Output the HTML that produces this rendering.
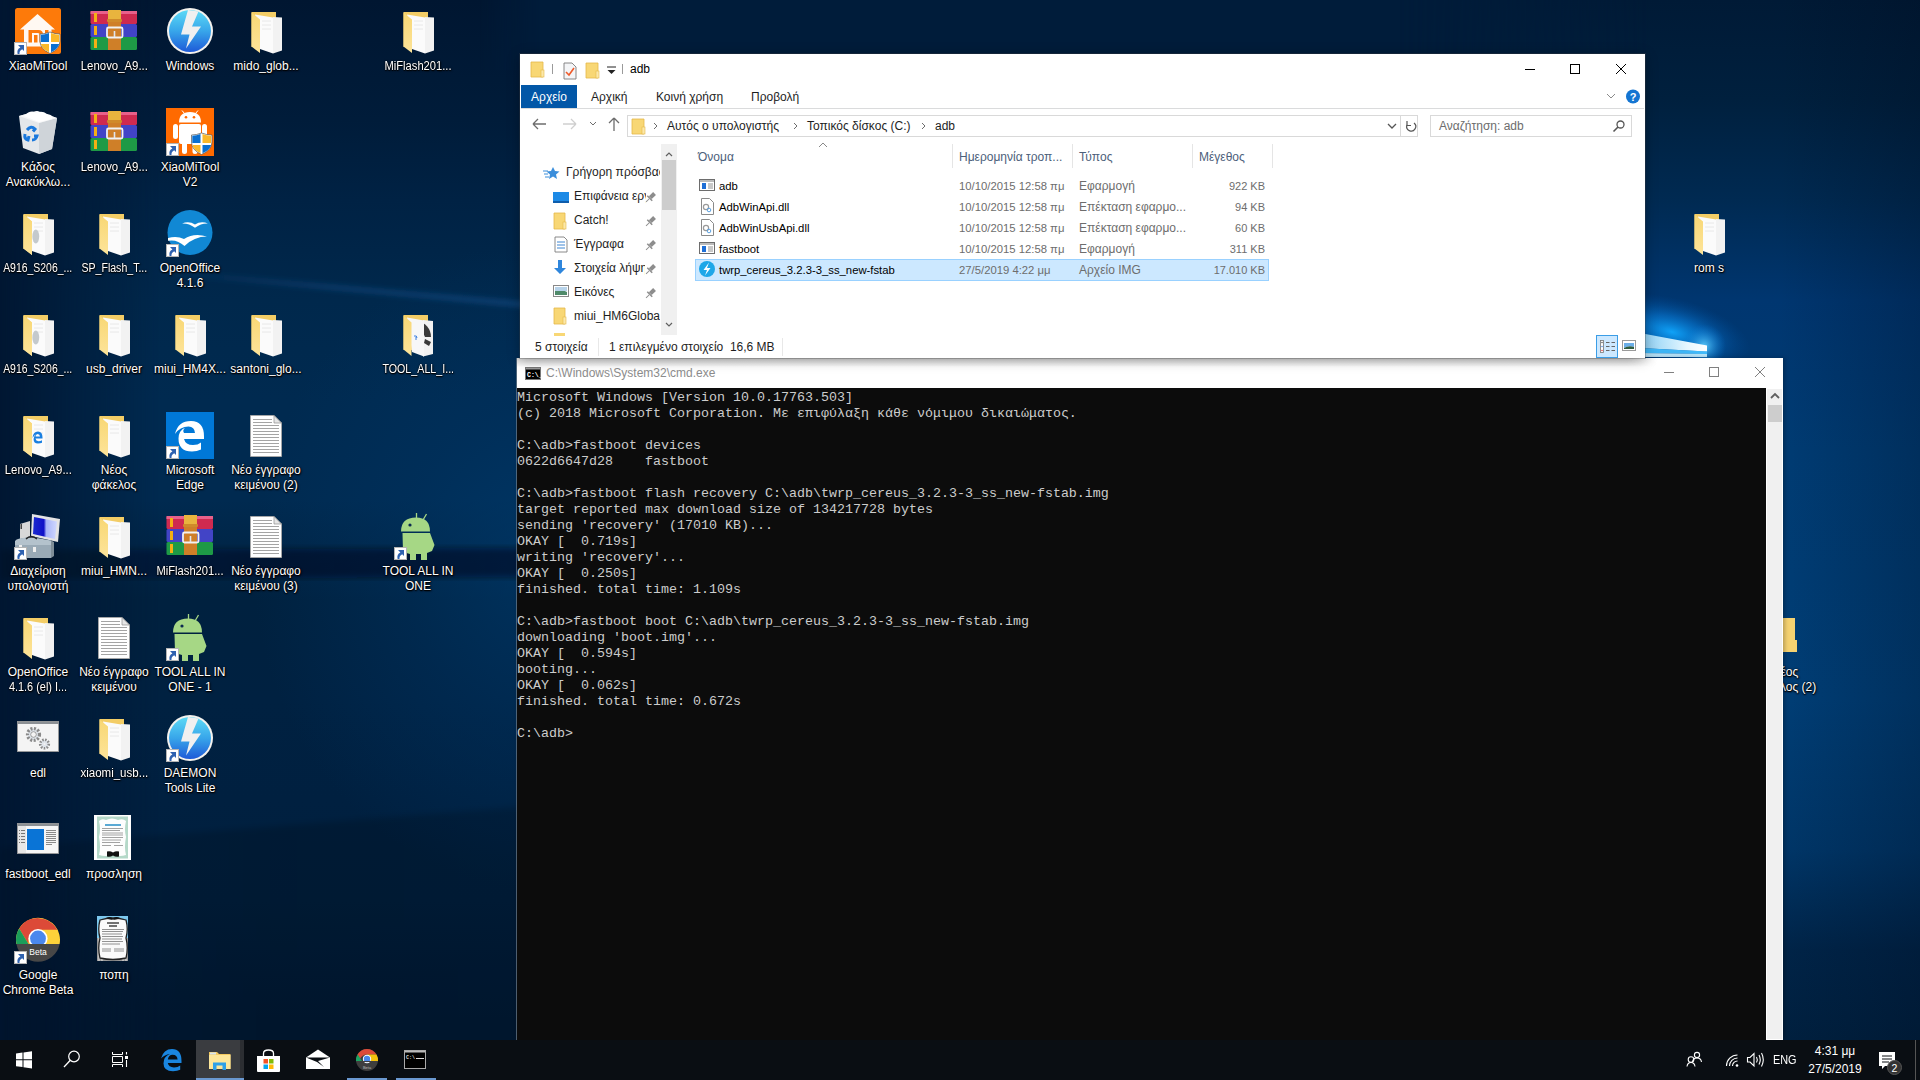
<!DOCTYPE html><html><head><meta charset="utf-8"><style>
*{box-sizing:border-box;margin:0;padding:0}
html,body{width:1920px;height:1080px;overflow:hidden;background:#011a36;font-family:"Liberation Sans",sans-serif}
.abs{position:absolute}
#bg{position:absolute;left:0;top:0;width:1920px;height:1080px;overflow:hidden}
.ic{position:absolute;width:76px;height:100px;text-align:center}
.ic svg{position:absolute;left:14px;top:0;width:48px;height:48px}
.ic .lb{position:absolute;left:0;top:52px;width:76px;color:#fff;font-size:12px;line-height:15px;text-shadow:0 1px 1px #000,0 0 2px #000,1px 1px 2px rgba(0,0,0,.8)}
</style></head><body>
<div id="bg">
<div class="abs" style="left:0;top:0;width:1920px;height:1080px;background:#001631"></div>
<div class="abs" style="left:0;top:0;width:1100px;height:1080px;background:linear-gradient(180deg,#001631 0px,#001c3a 120px,#002244 200px,#00284c 300px,#002a50 400px,#002a50 500px,#00213f 600px,#002141 700px,#002040 800px,#001f3e 900px,#001a36 1020px);-webkit-mask-image:linear-gradient(90deg,rgba(0,0,0,.05) 0px,#000 160px)"></div>
<div class="abs" style="left:480px;top:0;width:1250px;height:70px;background:#001c3a;-webkit-mask-image:linear-gradient(90deg,transparent 0px,#000 60px,#000 1150px,transparent 1250px)"></div>
<div class="abs" style="left:200px;top:250px;width:700px;height:700px;background:radial-gradient(ellipse at 50% 45%,rgba(0,62,115,.6) 0%,rgba(0,55,105,.35) 30%,rgba(0,40,80,0) 60%)"></div>
<svg class="abs" style="left:0;top:230px" width="1100" height="140" viewBox="0 230 1100 140">
 <defs><linearGradient id="lband" x1="0" y1="0" x2="1" y2="0"><stop offset="0" stop-color="#2a70c0" stop-opacity="0"/><stop offset=".2" stop-color="#2a70c0" stop-opacity=".22"/><stop offset=".5" stop-color="#2a70c0" stop-opacity=".28"/></linearGradient><filter id="blr2" x="-5%" y="-50%" width="110%" height="200%"><feGaussianBlur stdDeviation="2.5"/></filter></defs>
 <path d="M150 268 L1100 352 L1100 360 L150 274Z" fill="url(#lband)" filter="url(#blr2)"/>
</svg>
<svg class="abs" style="left:0;top:500px" width="1100" height="580" viewBox="0 500 1100 580">
 <defs><filter id="blr" x="-5%" y="-5%" width="110%" height="110%"><feGaussianBlur stdDeviation="3"/></filter>
 <linearGradient id="strk" x1="0" y1="0" x2="1" y2="0"><stop offset="0" stop-color="#000814" stop-opacity=".15"/><stop offset=".25" stop-color="#000814" stop-opacity=".45"/><stop offset="1" stop-color="#000814" stop-opacity=".6"/></linearGradient>
 <linearGradient id="lowr" x1="0" y1="0" x2="1" y2="0"><stop offset="0" stop-color="#000814" stop-opacity=".1"/><stop offset=".25" stop-color="#000814" stop-opacity=".18"/><stop offset="1" stop-color="#000814" stop-opacity=".12"/></linearGradient></defs>
 <path d="M0 550 L1100 546 V575 L0 579Z" fill="url(#strk)" filter="url(#blr)"/>
 <path d="M0 848 L520 807 L1100 760 V1080 H0Z" fill="url(#lowr)" filter="url(#blr)"/>
</svg>
<div class="abs" style="left:1400px;top:0;width:520px;height:1080px;background:linear-gradient(180deg,#001a36 0px,#00203e 100px,#002a52 200px,#003670 300px,#003c74 450px,#003e76 700px,#003668 850px,#002448 950px,#00203f 1040px);-webkit-mask-image:linear-gradient(90deg,transparent 0px,#000 250px)"></div>
<div class="abs" style="left:1780px;top:0;width:140px;height:1080px;background:linear-gradient(90deg,rgba(0,8,24,0),rgba(0,8,24,.25))"></div>
<svg class="abs" style="left:1600px;top:220px" width="200" height="140" viewBox="0 0 200 140">
 <defs><linearGradient id="bm" x1="0" y1="0" x2="1" y2="0"><stop offset="0" stop-color="#9fe0ff" stop-opacity=".85"/><stop offset=".7" stop-color="#e6f7ff"/><stop offset="1" stop-color="#ffffff"/></linearGradient>
 <radialGradient id="bgl" cx=".5" cy=".5" r=".5"><stop offset="0" stop-color="#10a8ff" stop-opacity=".95"/><stop offset=".45" stop-color="#0880e0" stop-opacity=".55"/><stop offset="1" stop-color="#0050a0" stop-opacity="0"/></radialGradient>
 <radialGradient id="bgl2" cx=".5" cy=".5" r=".5"><stop offset="0" stop-color="#60d0ff" stop-opacity=".9"/><stop offset="1" stop-color="#0070d0" stop-opacity="0"/></radialGradient></defs>
 <ellipse cx="72" cy="112" rx="80" ry="34" fill="url(#bgl)" transform="rotate(14 72 112)"/>
 <ellipse cx="104" cy="126" rx="22" ry="22" fill="url(#bgl2)"/>
 <path d="M40 113 L107 125.5 V131.5 L40 128Z" fill="url(#bm)"/>
 <path d="M40 128 L107 131.5 V134 L40 133Z" fill="#44c0ff" opacity=".9"/>
 <path d="M40 133 L107 134 V137 L40 137Z" fill="#c8f0ff" opacity=".9"/>
</svg>
</div>
<div class="ic" style="left:0px;top:7px"><svg viewBox="0 0 48 48"><use href="#i_xmt"/><use href="#sc"/></svg><div class="lb">XiaoMiTool</div></div>
<div class="ic" style="left:76px;top:7px"><svg viewBox="0 0 48 48"><use href="#i_rar"/></svg><div class="lb"><span style="display:inline-block;margin:0 -10px;transform:scaleX(0.95)">Lenovo_A9...</span></div></div>
<div class="ic" style="left:152px;top:7px"><svg viewBox="0 0 48 48"><use href="#i_dtl"/></svg><div class="lb">Windows</div></div>
<div class="ic" style="left:228px;top:7px"><svg viewBox="0 0 48 48"><use href="#i_fold"/></svg><div class="lb">mido_glob...</div></div>
<div class="ic" style="left:380px;top:7px"><svg viewBox="0 0 48 48"><use href="#i_fold"/></svg><div class="lb"><span style="display:inline-block;margin:0 -10px;transform:scaleX(0.93)">MiFlash201...</span></div></div>
<div class="ic" style="left:0px;top:108px"><svg viewBox="0 0 48 48"><use href="#i_bin"/></svg><div class="lb">Κάδος<br>Ανακύκλω...</div></div>
<div class="ic" style="left:76px;top:108px"><svg viewBox="0 0 48 48"><use href="#i_rar"/></svg><div class="lb"><span style="display:inline-block;margin:0 -10px;transform:scaleX(0.95)">Lenovo_A9...</span></div></div>
<div class="ic" style="left:152px;top:108px"><svg viewBox="0 0 48 48"><use href="#i_xmt2"/><use href="#sc"/></svg><div class="lb">XiaoMiTool<br>V2</div></div>
<div class="ic" style="left:0px;top:209px"><svg viewBox="0 0 48 48"><use href="#i_foldD"/></svg><div class="lb"><span style="display:inline-block;margin:0 -10px;transform:scaleX(0.87)">A916_S206_...</span></div></div>
<div class="ic" style="left:76px;top:209px"><svg viewBox="0 0 48 48"><use href="#i_fold"/></svg><div class="lb"><span style="display:inline-block;margin:0 -10px;transform:scaleX(0.88)">SP_Flash_T...</span></div></div>
<div class="ic" style="left:152px;top:209px"><svg viewBox="0 0 48 48"><use href="#i_oo"/><use href="#sc"/></svg><div class="lb">OpenOffice<br>4.1.6</div></div>
<div class="ic" style="left:0px;top:310px"><svg viewBox="0 0 48 48"><use href="#i_foldD"/></svg><div class="lb"><span style="display:inline-block;margin:0 -10px;transform:scaleX(0.87)">A916_S206_...</span></div></div>
<div class="ic" style="left:76px;top:310px"><svg viewBox="0 0 48 48"><use href="#i_fold"/></svg><div class="lb">usb_driver</div></div>
<div class="ic" style="left:152px;top:310px"><svg viewBox="0 0 48 48"><use href="#i_fold"/></svg><div class="lb">miui_HM4X...</div></div>
<div class="ic" style="left:228px;top:310px"><svg viewBox="0 0 48 48"><use href="#i_fold"/></svg><div class="lb">santoni_glo...</div></div>
<div class="ic" style="left:380px;top:310px"><svg viewBox="0 0 48 48"><use href="#i_foldT"/></svg><div class="lb"><span style="display:inline-block;margin:0 -10px;transform:scaleX(0.89)">TOOL_ALL_I...</span></div></div>
<div class="ic" style="left:0px;top:411px"><svg viewBox="0 0 48 48"><use href="#i_foldL"/></svg><div class="lb"><span style="display:inline-block;margin:0 -10px;transform:scaleX(0.95)">Lenovo_A9...</span></div></div>
<div class="ic" style="left:76px;top:411px"><svg viewBox="0 0 48 48"><use href="#i_fold"/></svg><div class="lb">Νέος<br>φάκελος</div></div>
<div class="ic" style="left:152px;top:411px"><svg viewBox="0 0 48 48"><use href="#i_edge"/><use href="#sc"/></svg><div class="lb">Microsoft<br>Edge</div></div>
<div class="ic" style="left:228px;top:411px"><svg viewBox="0 0 48 48"><use href="#i_txt"/></svg><div class="lb">Νέο έγγραφο<br>κειμένου (2)</div></div>
<div class="ic" style="left:0px;top:512px"><svg viewBox="0 0 48 48"><use href="#i_cm"/><use href="#sc"/></svg><div class="lb">Διαχείριση<br>υπολογιστή</div></div>
<div class="ic" style="left:76px;top:512px"><svg viewBox="0 0 48 48"><use href="#i_fold"/></svg><div class="lb">miui_HMN...</div></div>
<div class="ic" style="left:152px;top:512px"><svg viewBox="0 0 48 48"><use href="#i_rar"/></svg><div class="lb"><span style="display:inline-block;margin:0 -10px;transform:scaleX(0.93)">MiFlash201...</span></div></div>
<div class="ic" style="left:228px;top:512px"><svg viewBox="0 0 48 48"><use href="#i_txt"/></svg><div class="lb">Νέο έγγραφο<br>κειμένου (3)</div></div>
<div class="ic" style="left:380px;top:512px"><svg viewBox="0 0 48 48"><use href="#i_andr"/><use href="#sc"/></svg><div class="lb">TOOL ALL IN<br>ONE</div></div>
<div class="ic" style="left:0px;top:613px"><svg viewBox="0 0 48 48"><use href="#i_fold"/></svg><div class="lb">OpenOffice<br><span style="display:inline-block;margin:0 -10px;transform:scaleX(0.91)">4.1.6 (el) I...</span></div></div>
<div class="ic" style="left:76px;top:613px"><svg viewBox="0 0 48 48"><use href="#i_txt"/></svg><div class="lb">Νέο έγγραφο<br>κειμένου</div></div>
<div class="ic" style="left:152px;top:613px"><svg viewBox="0 0 48 48"><use href="#i_andr"/><use href="#sc"/></svg><div class="lb">TOOL ALL IN<br>ONE - 1</div></div>
<div class="ic" style="left:0px;top:714px"><svg viewBox="0 0 48 48"><use href="#i_edl"/></svg><div class="lb">edl</div></div>
<div class="ic" style="left:76px;top:714px"><svg viewBox="0 0 48 48"><use href="#i_fold"/></svg><div class="lb"><span style="display:inline-block;margin:0 -10px;transform:scaleX(0.96)">xiaomi_usb...</span></div></div>
<div class="ic" style="left:152px;top:714px"><svg viewBox="0 0 48 48"><use href="#i_dtl"/><use href="#sc"/></svg><div class="lb">DAEMON<br>Tools Lite</div></div>
<div class="ic" style="left:0px;top:815px"><svg viewBox="0 0 48 48"><use href="#i_fbe"/></svg><div class="lb">fastboot_edl</div></div>
<div class="ic" style="left:76px;top:815px"><svg viewBox="0 0 48 48"><use href="#i_doc1"/></svg><div class="lb">προσληση</div></div>
<div class="ic" style="left:0px;top:916px"><svg viewBox="0 0 48 48"><use href="#i_chrome"/><use href="#sc"/></svg><div class="lb">Google<br>Chrome Beta</div></div>
<div class="ic" style="left:76px;top:916px"><svg viewBox="0 0 48 48"><use href="#i_doc2"/></svg><div class="lb">ποπη</div></div>
<div class="ic" style="left:1671px;top:209px"><svg viewBox="0 0 48 48"><use href="#i_fold"/></svg><div class="lb">rom s</div></div>
<div class="ic" style="left:1747px;top:613px"><svg viewBox="0 0 48 48"><use href="#i_foldE"/></svg><div class="lb">Νέος<br>φάκελος (2)</div></div>
<svg width="0" height="0" style="position:absolute"><defs>
<linearGradient id="gdtl" x1="0" y1="0" x2="0" y2="1"><stop offset="0" stop-color="#5cdaf6"/><stop offset=".5" stop-color="#38a6ea"/><stop offset="1" stop-color="#1e5ad8"/></linearGradient>
<linearGradient id="gscr" x1="0" y1="0" x2="1" y2="0"><stop offset="0" stop-color="#1a2ad0"/><stop offset=".45" stop-color="#1010c8"/><stop offset=".55" stop-color="#a8b4f8"/><stop offset="1" stop-color="#d0d8ff"/></linearGradient>
<linearGradient id="gfl" x1="0" y1="0" x2="0" y2="1"><stop offset="0" stop-color="#f8d774"/><stop offset="1" stop-color="#fde49a"/></linearGradient>
<symbol id="sc" viewBox="0 0 48 48"><rect x="0.5" y="35.5" width="12" height="12" fill="#fff" stroke="#b4b4b4" stroke-width="1"/><path d="M4 38 H10 V44 L8.2 42.2 Q5 44 5.5 47 H3.6 Q2.5 42 6.4 40.4Z" fill="#2f62b0"/></symbol>
<symbol id="i_fold" viewBox="0 0 48 48"><path d="M9.5 5 H34 V40 H9.5Z" fill="#f3cd66"/><path d="M31 10 L40 10.5 V43.5 L31 46.5Z" fill="#f2f2f2"/><path d="M13 7.5 L31 10.5 V46.5 L18 42Z" fill="#fbfbfb"/><path d="M20 14 H29 M20 18 H29 M20 22 H29" stroke="#e4e4e4" stroke-width=".8"/><path d="M9.5 5.5 L18 12.5 V46 L9.5 39.5Z" fill="url(#gfl)"/></symbol>
<symbol id="i_foldD" viewBox="0 0 48 48"><use href="#i_fold"/><ellipse cx="21.8" cy="27.5" rx="3.4" ry="7" fill="#c4c9cc"/><path d="M9.5 5.5 L18 12.5 V46 L9.5 39.5Z" fill="url(#gfl)"/></symbol>
<symbol id="i_foldL" viewBox="0 0 48 48"><use href="#i_fold"/><path fill-rule="evenodd" d="M18.5 27 Q19 20.5 24 20.5 Q28.5 20.5 28.5 26.5 V27.5 H21.5 Q21.8 30 24.5 30.2 Q26.5 30.2 28 29.2 V31.8 Q26.5 32.6 24 32.6 Q19.5 32.6 19.6 28 Q19.8 24.5 22.5 23.2 Q20 23.8 18.5 27Z M21.5 25.5 H26 Q25.8 23 23.7 23 Q21.8 23 21.5 25.5Z" fill="#1a7fe0"/><path d="M9.5 5.5 L18 12.5 V46 L9.5 39.5Z" fill="url(#gfl)"/></symbol>
<symbol id="i_foldT" viewBox="0 0 48 48"><path d="M9.5 5 H34 V40 H9.5Z" fill="#f3cd66"/><path d="M29 10 L39 11 V44 L29 46.5Z" fill="#f2f2f2"/><path d="M24 12 A13 15 0 0 1 37 27 H31 Z" fill="#3a3a3a"/><path d="M31 29 L37 32 L35 36 L30 33Z" fill="#3a3a3a"/><path d="M13 7.5 L30 10.5 V46.5 L18 42Z" fill="#f7f7f7"/><path d="M20 26 Q23 25 23 28 M22 27 V30" stroke="#3a7ee0" stroke-width="1" fill="none"/><path d="M9.5 5.5 L17.5 12.5 V46 L9.5 39.5Z" fill="url(#gfl)"/></symbol>
<symbol id="i_foldE" viewBox="0 0 48 48"><path d="M9.5 5 H34 V27 H36 V39 H9.5Z" fill="#f5d271"/><path d="M9.5 5.5 L17.5 12.5 V46 L9.5 39.5Z" fill="url(#gfl)"/></symbol>
<symbol id="i_xmt" viewBox="0 0 48 48"><rect x="1" y="1" width="46" height="46" rx="2.5" fill="#fd7a0a"/><path d="M23.5 7 L41 22.5 H37.5 V39.5 H10 V22.5 H6Z" fill="#fff8f2"/><path d="M14.5 23 H24.5 Q29 23 29 27.5 V35.5 H25.5 V27.5 Q25.5 26 24 26 H18 V35.5 H14.5Z M20 28 H23.5 V35.5 H20Z M31 23 H34.5 V35.5 H31Z" fill="#fd7a0a"/><path d="M26 27 Q31 27 36 25 Q41 27 46 27 V34 Q46 42 36 46.5 Q26 42 26 34Z" fill="#fff" stroke="#555" stroke-width=".7"/><path d="M26.8 27.7 Q31 27.7 35 26 V35 H26.8Z" fill="#0a6fd0"/><path d="M37 26 Q41 27.7 45.2 27.7 V35 H37Z" fill="#fbb829"/><path d="M26.8 37 H35 V45.2 Q28 42 26.8 37Z" fill="#fbb829"/><path d="M37 37 H45.2 Q44 42 37 45.2Z" fill="#0a6fd0"/></symbol>
<symbol id="i_xmt2" viewBox="0 0 48 48"><rect x="0" y="0" width="48" height="48" fill="#ff6a00"/><path d="M13 14.5 Q13 4 24 4 Q35 4 35 14.5Z" fill="#fff"/><circle cx="20" cy="9.3" r="1.3" fill="#ff6a00"/><circle cx="28" cy="9.3" r="1.3" fill="#ff6a00"/><path d="M16 2.5 L18.5 5.5 M32 2.5 L29.5 5.5" stroke="#fff" stroke-width="1"/><rect x="13" y="16" width="22" height="20" rx="2" fill="#fff"/><rect x="7" y="16" width="5" height="15" rx="2.5" fill="#fff"/><rect x="36" y="16" width="5" height="15" rx="2.5" fill="#fff"/><rect x="16" y="33" width="5" height="13" rx="2.5" fill="#fff"/><rect x="26.5" y="33" width="5" height="13" rx="2.5" fill="#fff"/><path d="M25.5 27 Q30.5 27 35.5 25 Q40.5 27 46 27 V34 Q46 42 35.5 46.5 Q25.5 42 25.5 34Z" fill="#fff" stroke="#555" stroke-width=".7"/><path d="M26.3 27.7 Q30.5 27.7 34.5 26 V35 H26.3Z" fill="#0a6fd0"/><path d="M36.5 26 Q40.5 27.7 45.2 27.7 V35 H36.5Z" fill="#fbb829"/><path d="M26.3 37 H34.5 V45.2 Q27.5 42 26.3 37Z" fill="#fbb829"/><path d="M36.5 37 H45.2 Q44 42 36.5 45.2Z" fill="#0a6fd0"/></symbol>
<symbol id="i_rar" viewBox="0 0 48 48"><rect x="0.5" y="4" width="46.5" height="13" rx="1.5" fill="#cf2a50"/><rect x="0.5" y="4" width="46.5" height="3" fill="#e8608a"/><rect x="0.5" y="17" width="46.5" height="13" rx="1.5" fill="#4244c6"/><rect x="0.5" y="30" width="46.5" height="13" rx="1.5" fill="#1e9a46"/><rect x="4" y="6" width="3" height="9" fill="#f5b014"/><rect x="4" y="19" width="3" height="9" fill="#f5b014"/><rect x="4" y="32" width="3" height="9" fill="#f5b014"/><rect x="18" y="3" width="13" height="40" fill="#cf7f28"/><rect x="18" y="3" width="13" height="10" fill="#e8b43e"/><rect x="17" y="12" width="15" height="3" rx="1" fill="#d08a2a"/><rect x="17" y="20.5" width="15.5" height="10" rx="1.5" fill="none" stroke="#f2f2f2" stroke-width="1.8"/><path d="M24.5 24 V30" stroke="#e0e6ee" stroke-width="1.6"/></symbol>
<symbol id="i_dtl" viewBox="0 0 48 48"><circle cx="24" cy="24" r="23" fill="#f4f2ee"/><circle cx="24" cy="24" r="21" fill="url(#gdtl)"/><path d="M22 3 L32.5 4.5 L26 19.5 H35 L20 41.5 L23.5 27.5 H15Z" fill="#f0f0f0"/></symbol>
<symbol id="i_bin" viewBox="0 0 48 48"><path d="M5 8 L23 3 L43 10 L38 41 L25 46 L9 40Z" fill="#e4e7ea"/><path d="M25 15 L43 10 L38 41 L25 46Z" fill="#cfd4d9"/><path d="M5 8 L23 3 L43 10 L25 15Z" fill="#f6f7f8"/><path d="M10 8 Q17 1 22 5 Q28 2 33 6 Q40 7 38 11 L25 14 Z" fill="#ffffff"/><path d="M13 22 Q17 17 21 21 L19 23.5 M11 26 Q10 31 14 32 L15 28 M18 32 Q22 32 23 28 L20 28" fill="none" stroke="#1a78dc" stroke-width="3"/></symbol>
<symbol id="i_oo" viewBox="0 0 48 48"><circle cx="24" cy="23.5" r="22.5" fill="#1188d4"/><path d="M16 14.5 Q23 11.5 29 15.5 Q35 11.5 42 14.5 Q35 14.2 29 18.8 Q23 14.2 16 14.5Z" fill="#fff"/><path d="M2 29 Q11 26.5 18 30 Q28 23.5 41 27.5 Q28 27.5 18.5 37 Q11 30 2 31.8Z" fill="#fff"/></symbol>
<symbol id="i_edge" viewBox="0 0 48 48"><rect x="0" y="1" width="48" height="47" fill="#0078d7"/><path d="M9 23 Q12 10 25 10 Q38 10 38 25.5 V28 H18 Q19.5 34 27 34 Q32 34 35 31.5 V38.5 Q31 40.5 26 40.5 Q12.5 40.5 12.5 27.5 Q12.5 19.5 19.5 16.5 Q16 19 18 22 H29 Q28.5 15.5 22.5 15.5 Q14 15.5 9 23Z" fill="#fff"/></symbol>
<symbol id="i_txt" viewBox="0 0 48 48"><path d="M8.5 4.5 H32 L39.5 12 V45.5 H8.5Z" fill="#fff" stroke="#a8a8a8" stroke-width=".9"/><path d="M32 4.5 V12 H39.5Z" fill="#e6e6e6" stroke="#8c8c8c" stroke-width=".7"/><path d="M11 8.5H30M11 11.5H30M11 14.5H37M11 17.5H37M11 20.5H37M11 23.5H37M11 26.5H37M11 29.5H37M11 32.5H37M11 35.5H37M11 38.5H37M11 41.5H37" stroke="#a4a4a4" stroke-width="1"/></symbol>
<symbol id="i_cm" viewBox="0 0 48 48"><path d="M6 12 L16 9 V25 L6 27Z" fill="#d8d8d8"/><rect x="6.5" y="12" width="1.5" height="5" fill="#444"/><path d="M18 2 L46 7 L44 30 L17 24Z" fill="#e4e4e4"/><path d="M20 5 L43 9.5 L41 27 L19 22Z" fill="url(#gscr)"/><path d="M1 29 Q3 25 20 25.5 L37 28.5 V34 H1Z" fill="#b4c2cc"/><path d="M1 33 H37 V46 H1Z" fill="#9aaab6"/><path d="M37 28.5 L40 30 V44 L37 46Z" fill="#7f8e98"/><path d="M12 27 Q17 22 23 27" fill="none" stroke="#222" stroke-width="1.4"/><rect x="5" y="33" width="3" height="4" fill="#eee"/><rect x="19" y="35" width="3" height="5" fill="#eee"/></symbol>
<symbol id="i_andr" viewBox="0 0 48 48"><path d="M7 19.5 Q7 5.5 22 5.5 Q36 5.5 36 19.5Z" fill="#a6d785"/><path d="M22.5 1 V6 M32.5 2 L29 8" stroke="#a6d785" stroke-width="1.3"/><circle cx="16" cy="13" r="1.6" fill="#0c2a50"/><path d="M8.5 21 H36 L40.5 33 L38 39 L33 41 V48 H27 V42 H22 V48 H16 V42 L9 40Z" fill="#a6d785"/></symbol>
<symbol id="i_edl" viewBox="0 0 48 48"><rect x="3.5" y="7.5" width="41" height="30" fill="#f4f4f4" stroke="#9a9a9a" stroke-width=".9"/><rect x="3.5" y="7.5" width="41" height="2.5" fill="#8c9094"/><circle cx="19.5" cy="20.5" r="6" fill="#dfe4ea" stroke="#8a8a8a" stroke-width="3.2" stroke-dasharray="2 1.5"/><circle cx="19.5" cy="20.5" r="2.8" fill="#f4f4f4" stroke="#8a8a8a" stroke-width=".8"/><circle cx="30.5" cy="30" r="4.3" fill="#dfe4ea" stroke="#8a8a8a" stroke-width="2.6" stroke-dasharray="1.6 1.3"/><circle cx="30.5" cy="30" r="1" fill="#f4f4f4"/></symbol>
<symbol id="i_fbe" viewBox="0 0 48 48"><rect x="3.5" y="8.5" width="41" height="30" fill="#f6f6f6" stroke="#9a9a9a" stroke-width=".9"/><rect x="3.5" y="8.5" width="41" height="2.5" fill="#8c9094"/><rect x="4" y="11" width="8" height="27" fill="#e6e6e6"/><path d="M5 15.5H6M7 15.5H11M5 18.5H6M7 18.5H11M5 21.5H6M7 21.5H11M5 24.5H6M7 24.5H11M5 27.5H6M7 27.5H11" stroke="#777" stroke-width="1"/><rect x="13" y="14" width="17" height="21" fill="#0a74d6"/><path d="M32 15.5H42M32 17.5H42M32 19.5H42M32 21.5H42M32 23.5H42M32 25.5H42M32 27.5H42M32 29.5H38" stroke="#8a8a8a" stroke-width="1"/></symbol>
<symbol id="i_doc1" viewBox="0 0 48 48"><rect x="4" y="0" width="37" height="45" fill="#fff"/><rect x="7" y="1.5" width="31" height="42" fill="#b4d8c8"/><path d="M9 6 Q12 3 16 5 Q22 2 28 5 Q33 3 36 6 Q34 14 36 22 Q34 32 36 40 Q30 42 23 40 Q15 42 9 40 Q11 32 9 22 Q11 14 9 6Z" fill="#fdfdfd"/><path d="M15 10H31" stroke="#48a0d0" stroke-width="1.8"/><path d="M12 13.5H33M12 15.5H30M12 18H33M12 20H33M12 22.5H33M12 25H31M12 27.5H30M12 30.5H21M24 30.5H33" stroke="#8a8a8a" stroke-width=".8"/><path d="M17 36.5 Q20 35.5 23 37.5 Q26 35.5 29 36.5 V41.5 Q26 42.5 23 40.5 Q20 42.5 17 41.5Z" fill="#111"/></symbol>
<symbol id="i_doc2" viewBox="0 0 48 48"><rect x="7" y="0" width="31" height="22" fill="#7cc8ee"/><rect x="7" y="22" width="31" height="23" fill="#9a9a9a"/><path d="M9 22V45M12 22V45M33 22V45M36 22V45" stroke="#d8d8d8" stroke-width="1.2"/><path d="M10 4 Q23 0 36 4 Q38.5 13 36 22 Q38.5 32 36 42 Q23 45 10 42 Q7.5 32 10 22 Q7.5 13 10 4Z" fill="#fafafa" stroke="#222" stroke-width="1.3"/><path d="M16 2 Q20 0 23 2.5 Q26 0 30 2 Q26 4.5 23 3.5 Q20 4.5 16 2Z" fill="#111"/><path d="M17 7H29M19 10H27" stroke="#444" stroke-width="1.3"/><path d="M12 13.5H34M12 15.5H33M12 18H32M12 20.5H33M12 23H32M12 25.5H33M12 28H30M12 33H21M24 33H34M12 35H21M24 35H34" stroke="#777" stroke-width=".8"/></symbol>
<symbol id="i_chrome" viewBox="0 0 48 48"><path d="M2.4 28 A22 22 0 1 1 45.6 28Z" fill="#fdd23a"/><path d="M5.2 12.5 A22 22 0 0 1 43.3 13.8 H24 L14.5 22.5 V28Z" fill="#dc4a38"/><path d="M5.2 12.5 L14.5 28 H2.4 A22 22 0 0 1 5.2 12.5Z" fill="#1a9d5a"/><circle cx="24" cy="22.5" r="9.6" fill="#fff"/><circle cx="24" cy="22.5" r="7.9" fill="#4a88ee"/><path d="M2.4 28 H45.6 A22 22 0 0 1 2.4 28Z" fill="#474747"/><text x="24" y="38.5" font-size="8.5" fill="#fff" text-anchor="middle" font-family="Liberation Sans">Beta</text></symbol>
</defs></svg>

<!-- explorer -->
<div class="abs" id="exp" style="z-index:5;left:520px;top:54px;width:1125px;height:304px;background:#fff;box-shadow:0 2px 12px rgba(0,0,0,.3),0 0 0 1px rgba(80,80,80,.3);font-size:12px;color:#000">
 <!-- quick access toolbar -->
 <svg class="abs" style="left:0;top:0" width="120" height="30" viewBox="0 0 120 30">
  <path d="M11 8 H23 V23 H11Z" fill="#f8d775" stroke="#e4b84a" stroke-width=".8"/><rect x="21" y="16" width="3" height="7" fill="#fce8a8" stroke="#e4b84a" stroke-width=".6"/>
  <path d="M32.5 10 V20" stroke="#9a9a9a"/>
  <path d="M44 9 H52 L56 13 V25 H44Z" fill="#f4f5f7" stroke="#7a7a7a" stroke-width=".9"/><path d="M46 18 L49 21 L54 14" fill="none" stroke="#ef5b2b" stroke-width="1.6"/>
  <path d="M66 9 H78 V24 H66Z" fill="#f8d775" stroke="#e4b84a" stroke-width=".8"/><rect x="76" y="17" width="3" height="7" fill="#fce8a8" stroke="#e4b84a" stroke-width=".6"/>
  <path d="M87 13 H96" stroke="#222" stroke-width="1"/><path d="M87.5 16 H95.5 L91.5 20Z" fill="#222"/>
  <path d="M102.5 10 V20" stroke="#9a9a9a"/>
 </svg>
 <div class="abs" style="left:110px;top:8px;font-size:12px;color:#000">adb</div>
 <!-- caption buttons -->
 <svg class="abs" style="left:996px;top:0" width="129" height="30" viewBox="0 0 129 30">
  <path d="M9 15.5 H19" stroke="#000" stroke-width="1"/>
  <rect x="54.5" y="10.5" width="9" height="9" fill="none" stroke="#000" stroke-width="1"/>
  <path d="M100 10 L110 20 M110 10 L100 20" stroke="#000" stroke-width="1"/>
 </svg>
 <!-- ribbon tabs -->
 <div class="abs" style="left:1px;top:31px;width:56px;height:23px;padding-top:1px;background:#0257a7;color:#fff;text-align:center;line-height:23px">Αρχείο</div>
 <div class="abs" style="left:71px;top:32px;line-height:23px;color:#1e1e1e">Αρχική</div>
 <div class="abs" style="left:136px;top:32px;line-height:23px;color:#1e1e1e">Κοινή χρήση</div>
 <div class="abs" style="left:231px;top:32px;line-height:23px;color:#1e1e1e">Προβολή</div>
 <svg class="abs" style="left:1080px;top:32px" width="45" height="22" viewBox="0 0 45 22">
  <path d="M7 8 L11 12 L15 8" fill="none" stroke="#8a8a8a" stroke-width="1"/>
  <circle cx="33" cy="10.5" r="7" fill="#1475d2"/><text x="33" y="14.5" font-size="11" font-weight="bold" fill="#fff" text-anchor="middle" font-family="Liberation Sans">?</text>
 </svg>
 <div class="abs" style="left:1px;top:54px;width:1123px;height:1px;background:#dadbdc"></div>
 <!-- nav buttons -->
 <svg class="abs" style="left:0;top:58px" width="110" height="22" viewBox="0 0 110 22">
  <path d="M13 12 H26 M13 12 L18 7 M13 12 L18 17" fill="none" stroke="#6d6d6d" stroke-width="1.3"/>
  <path d="M43 12 H56 M56 12 L51 7 M56 12 L51 17" fill="none" stroke="#cfcfcf" stroke-width="1.3"/>
  <path d="M70 10 L73 13 L76 10" fill="none" stroke="#6d6d6d" stroke-width="1"/>
  <path d="M94 19 V6 M94 6 L89 11 M94 6 L99 11" fill="none" stroke="#6d6d6d" stroke-width="1.3"/>
 </svg>
 <!-- address bar -->
 <div class="abs" style="left:107px;top:61px;width:791px;height:22px;border:1px solid #d9d9d9"></div>
 <svg class="abs" style="left:107px;top:61px" width="40" height="22" viewBox="0 0 40 22">
  <path d="M5 4 H17 V19 H5Z" fill="#f8d775" stroke="#e4b84a" stroke-width=".8"/><rect x="15" y="12" width="3" height="7" fill="#fce8a8" stroke="#e4b84a" stroke-width=".6"/>
  <path d="M27 8 L30 11 L27 14" fill="none" stroke="#6d6d6d" stroke-width="1"/>
 </svg>
 <div class="abs" style="left:147px;top:64px;line-height:16px;color:#1e1e1e">Αυτός ο υπολογιστής</div>
 <svg class="abs" style="left:270px;top:61px" width="20" height="22"><path d="M4 8 L7 11 L4 14" fill="none" stroke="#6d6d6d" stroke-width="1"/></svg>
 <div class="abs" style="left:287px;top:64px;line-height:16px;color:#1e1e1e">Τοπικός δίσκος (C:)</div>
 <svg class="abs" style="left:398px;top:61px" width="20" height="22"><path d="M4 8 L7 11 L4 14" fill="none" stroke="#6d6d6d" stroke-width="1"/></svg>
 <div class="abs" style="left:415px;top:64px;line-height:16px;color:#1e1e1e">adb</div>
 <svg class="abs" style="left:860px;top:61px" width="40" height="22" viewBox="0 0 40 22">
  <path d="M8 9 L12 13 L16 9" fill="none" stroke="#555" stroke-width="1.3"/>
  <path d="M20.5 1 V21" stroke="#d9d9d9"/>
  <path d="M34 8 A4.5 4.5 0 1 1 27 10" fill="none" stroke="#555" stroke-width="1.2"/><path d="M27 6 L27 10.5 L31 10.5" fill="none" stroke="#555" stroke-width="1.2"/>
 </svg>
 <!-- search -->
 <div class="abs" style="left:910px;top:61px;width:202px;height:22px;border:1px solid #d9d9d9"></div>
 <div class="abs" style="left:919px;top:64px;line-height:16px;color:#6d6d6d">Αναζήτηση: adb</div>
 <svg class="abs" style="left:1088px;top:61px" width="22" height="22"><circle cx="12.5" cy="9.5" r="3.5" fill="none" stroke="#555" stroke-width="1.3"/><path d="M10 12 L5.5 16.5" stroke="#555" stroke-width="1.6"/></svg>
 <!-- nav pane -->
 <svg class="abs" style="left:0;top:86px" width="160" height="196" viewBox="0 0 160 196">
  <path d="M33 27 L35 31 L39.5 31.5 L36 34.5 L37 39 L33 36.5 L29 39 L30 34.5 L26.5 31.5 L31 31Z" fill="#3b8edb"/><path d="M23 31 H28 M24 34 H28 M25 37 H29" stroke="#3b8edb" stroke-width="1"/>
  <rect x="33" y="52" width="16" height="11" fill="#1d8ae6"/><path d="M33 62 H49" stroke="#0a4e99" stroke-width="1.5"/>
  <path d="M34 73 H45 V89 H34Z" fill="#f8d775" stroke="#e4b84a" stroke-width=".8"/><rect x="43" y="82" width="3" height="7" fill="#fce8a8" stroke="#e4b84a" stroke-width=".6"/>
  <path d="M35 97 H44 L47 100 V112 H35Z" fill="#fff" stroke="#7d7d7d" stroke-width=".9"/><path d="M37 102 H45 M37 105 H45 M37 108 H45" stroke="#3f86d2" stroke-width="1"/>
  <path d="M38 120 H42 V128 H46 L40 134 L34 128 H38Z" fill="#2f86dc"/>
  <rect x="33.5" y="145.5" width="15" height="11" fill="#fff" stroke="#888"/><path d="M35 151 Q40 148 47 152 V155 H35Z" fill="#4f8a6a"/><rect x="35" y="147" width="12" height="4" fill="#b7d3ea"/>
  <path d="M34 168 H45 V184 H34Z" fill="#f8d775" stroke="#e4b84a" stroke-width=".8"/><rect x="43" y="177" width="3" height="7" fill="#fce8a8" stroke="#e4b84a" stroke-width=".6"/>
  <path d="M34 193 H45 V196 H34Z" fill="#f8d775"/>
  <g transform="translate(131 57) rotate(45)"><rect x="-2" y="-5" width="4" height="6" fill="#8d8d8d"/><rect x="-3.5" y="1" width="7" height="1.5" fill="#8d8d8d"/><path d="M0 2.5 V7" stroke="#8d8d8d" stroke-width="1"/></g><g transform="translate(131 81) rotate(45)"><rect x="-2" y="-5" width="4" height="6" fill="#8d8d8d"/><rect x="-3.5" y="1" width="7" height="1.5" fill="#8d8d8d"/><path d="M0 2.5 V7" stroke="#8d8d8d" stroke-width="1"/></g><g transform="translate(131 105) rotate(45)"><rect x="-2" y="-5" width="4" height="6" fill="#8d8d8d"/><rect x="-3.5" y="1" width="7" height="1.5" fill="#8d8d8d"/><path d="M0 2.5 V7" stroke="#8d8d8d" stroke-width="1"/></g><g transform="translate(131 129) rotate(45)"><rect x="-2" y="-5" width="4" height="6" fill="#8d8d8d"/><rect x="-3.5" y="1" width="7" height="1.5" fill="#8d8d8d"/><path d="M0 2.5 V7" stroke="#8d8d8d" stroke-width="1"/></g><g transform="translate(131 153) rotate(45)"><rect x="-2" y="-5" width="4" height="6" fill="#8d8d8d"/><rect x="-3.5" y="1" width="7" height="1.5" fill="#8d8d8d"/><path d="M0 2.5 V7" stroke="#8d8d8d" stroke-width="1"/></g>
 </svg>
 <div class="abs" style="left:46px;top:110px;line-height:16px;color:#1e1e1e;width:94px;overflow:hidden;white-space:nowrap">Γρήγορη πρόσβαση</div>
 <div class="abs" style="left:54px;top:134px;line-height:16px;color:#1e1e1e;width:72px;overflow:hidden;white-space:nowrap">Επιφάνεια εργασίας</div>
 <div class="abs" style="left:54px;top:158px;line-height:16px;color:#1e1e1e">Catch!</div>
 <div class="abs" style="left:54px;top:182px;line-height:16px;color:#1e1e1e">Έγγραφα</div>
 <div class="abs" style="left:54px;top:206px;line-height:16px;color:#1e1e1e;width:71px;overflow:hidden;white-space:nowrap">Στοιχεία λήψης</div>
 <div class="abs" style="left:54px;top:230px;line-height:16px;color:#1e1e1e">Εικόνες</div>
 <div class="abs" style="left:54px;top:254px;line-height:16px;color:#1e1e1e;width:86px;overflow:hidden;white-space:nowrap">miui_HM6Global</div>
 <!-- nav scrollbar -->
 <div class="abs" style="left:141px;top:90px;width:16px;height:191px;background:#f0f0f0"></div>
 <div class="abs" style="left:142px;top:106px;width:14px;height:50px;background:#cdcdcd"></div>
 <svg class="abs" style="left:141px;top:90px" width="16" height="191"><path d="M5 12 L8 9 L11 12" fill="none" stroke="#606060" stroke-width="1.2"/><path d="M5 179 L8 182 L11 179" fill="none" stroke="#606060" stroke-width="1.2"/></svg>
 <!-- column headers -->
 <div class="abs" style="left:178px;top:95px;line-height:16px;color:#4c607a">Όνομα</div>
 <svg class="abs" style="left:295px;top:86px" width="16" height="10"><path d="M4 7 L8 3 L12 7" fill="none" stroke="#888" stroke-width="1"/></svg>
 <div class="abs" style="left:432px;top:90px;width:1px;height:24px;background:#e5e5e5"></div>
 <div class="abs" style="left:552px;top:90px;width:1px;height:24px;background:#e5e5e5"></div>
 <div class="abs" style="left:672px;top:90px;width:1px;height:24px;background:#e5e5e5"></div>
 <div class="abs" style="left:752px;top:90px;width:1px;height:24px;background:#e5e5e5"></div>
 <div class="abs" style="left:439px;top:95px;line-height:16px;color:#4c607a">Ημερομηνία τροπ...</div>
 <div class="abs" style="left:559px;top:95px;line-height:16px;color:#4c607a">Τύπος</div>
 <div class="abs" style="left:679px;top:95px;line-height:16px;color:#4c607a">Μέγεθος</div>
 <!-- selection -->
 <div class="abs" style="left:175px;top:205px;width:574px;height:22px;background:#cce8ff;border:1px solid #99d1ff"></div>
 <!-- file icons -->
 <svg class="abs" style="left:178px;top:122px" width="20" height="110" viewBox="0 0 20 110">
  <rect x="1.5" y="3.5" width="15" height="11" fill="#fff" stroke="#6d6d6d"/><rect x="2" y="4" width="14" height="2" fill="#bbb"/><rect x="4" y="7" width="4" height="6" fill="#1f6fd6"/><path d="M10 8 H15 M10 10 H15 M10 12 H15" stroke="#777" stroke-width=".8"/>
  <path d="M3.5 22.5 H11.5 L15.5 26.5 V38.5 H3.5Z" fill="#fff" stroke="#8a8a8a"/><circle cx="8" cy="31" r="2.6" fill="none" stroke="#9a9a9a" stroke-width="1.2"/><circle cx="11" cy="34" r="1.8" fill="none" stroke="#5aa0e0" stroke-width="1"/>
  <path d="M3.5 43.5 H11.5 L15.5 47.5 V59.5 H3.5Z" fill="#fff" stroke="#8a8a8a"/><circle cx="8" cy="52" r="2.6" fill="none" stroke="#9a9a9a" stroke-width="1.2"/><circle cx="11" cy="55" r="1.8" fill="none" stroke="#5aa0e0" stroke-width="1"/>
  <rect x="1.5" y="66.5" width="15" height="11" fill="#fff" stroke="#6d6d6d"/><rect x="2" y="67" width="14" height="2" fill="#bbb"/><rect x="4" y="70" width="4" height="6" fill="#1f6fd6"/><path d="M10 71 H15 M10 73 H15 M10 75 H15" stroke="#777" stroke-width=".8"/>
  <circle cx="9" cy="93" r="8" fill="#1ea7e8"/><path d="M11 86.5 L5.5 94 H9 L7 99.5 L12.5 92 H9Z" fill="#fff"/>
 </svg>
 <div class="abs" style="left:199px;top:124px;line-height:16px;font-size:11.3px">adb</div>
 <div class="abs" style="left:199px;top:145px;line-height:16px;font-size:11.3px">AdbWinApi.dll</div>
 <div class="abs" style="left:199px;top:166px;line-height:16px;font-size:11.3px">AdbWinUsbApi.dll</div>
 <div class="abs" style="left:199px;top:187px;line-height:16px;font-size:11.3px">fastboot</div>
 <div class="abs" style="left:199px;top:208px;line-height:16px;font-size:11.3px">twrp_cereus_3.2.3-3_ss_new-fstab</div>
 <div class="abs" style="left:439px;top:124px;line-height:16px;color:#6d6d6d;font-size:11.3px">10/10/2015 12:58 πμ</div>
 <div class="abs" style="left:439px;top:145px;line-height:16px;color:#6d6d6d;font-size:11.3px">10/10/2015 12:58 πμ</div>
 <div class="abs" style="left:439px;top:166px;line-height:16px;color:#6d6d6d;font-size:11.3px">10/10/2015 12:58 πμ</div>
 <div class="abs" style="left:439px;top:187px;line-height:16px;color:#6d6d6d;font-size:11.3px">10/10/2015 12:58 πμ</div>
 <div class="abs" style="left:439px;top:208px;line-height:16px;color:#6d6d6d;font-size:11.3px">27/5/2019 4:22 μμ</div>
 <div class="abs" style="left:559px;top:124px;line-height:16px;color:#6d6d6d">Εφαρμογή</div>
 <div class="abs" style="left:559px;top:145px;line-height:16px;color:#6d6d6d">Επέκταση εφαρμο...</div>
 <div class="abs" style="left:559px;top:166px;line-height:16px;color:#6d6d6d">Επέκταση εφαρμο...</div>
 <div class="abs" style="left:559px;top:187px;line-height:16px;color:#6d6d6d">Εφαρμογή</div>
 <div class="abs" style="left:559px;top:208px;line-height:16px;color:#6d6d6d">Αρχείο IMG</div>
 <div class="abs" style="left:645px;top:124px;width:100px;text-align:right;line-height:16px;color:#6d6d6d;font-size:11px">922 KB</div>
 <div class="abs" style="left:645px;top:145px;width:100px;text-align:right;line-height:16px;color:#6d6d6d;font-size:11px">94 KB</div>
 <div class="abs" style="left:645px;top:166px;width:100px;text-align:right;line-height:16px;color:#6d6d6d;font-size:11px">60 KB</div>
 <div class="abs" style="left:645px;top:187px;width:100px;text-align:right;line-height:16px;color:#6d6d6d;font-size:11px">311 KB</div>
 <div class="abs" style="left:645px;top:208px;width:100px;text-align:right;line-height:16px;color:#6d6d6d;font-size:11px">17.010 KB</div>
 <!-- status bar -->
 <div class="abs" style="left:15px;top:285px;line-height:16px;color:#1e1e1e">5 στοιχεία</div>
 <div class="abs" style="left:78px;top:284px;width:1px;height:18px;background:#e8e8e8"></div>
 <div class="abs" style="left:89px;top:285px;line-height:16px;color:#1e1e1e;white-space:pre">1 επιλεγμένο στοιχείο  16,6 MB</div>
 <div class="abs" style="left:262px;top:284px;width:1px;height:18px;background:#e8e8e8"></div>
 <svg class="abs" style="left:1076px;top:281px" width="44" height="24" viewBox="0 0 44 24">
  <rect x="0.5" y="0.5" width="21" height="22" fill="#cce8ff" stroke="#3b9de6" stroke-width="1"/>
  <rect x="4.5" y="5.5" width="3" height="12" fill="#fff" stroke="#777" stroke-width=".8"/><circle cx="6" cy="7.5" r=".7" fill="#444"/><circle cx="6" cy="11.5" r=".7" fill="#3b7de0"/><circle cx="6" cy="15.5" r=".7" fill="#e02020"/>
  <path d="M10 7.5 H13.5 M15.5 7.5 H19 M10 11.5 H13.5 M15.5 11.5 H19 M10 15.5 H13.5 M15.5 15.5 H19" stroke="#666" stroke-width="1.1"/>
  <rect x="26.5" y="5.5" width="13" height="10" fill="#fff" stroke="#9a9a9a" stroke-width="1"/><path d="M28 8 H38 V12 Q33 10 28 13Z" fill="#6aaee8"/><path d="M28 13 Q33 10 38 12 V14 H28Z" fill="#2f5d40"/>
 </svg>
</div>
<!-- cmd -->
<div class="abs" id="cmd" style="z-index:4;left:517px;top:358px;width:1266px;height:682px;background:#fff;box-shadow:-1px 0 0 rgba(110,125,140,.7),2px 0 4px rgba(0,0,0,.25)">
 <div class="abs" style="left:0;top:0;width:1140px;height:9px;background:linear-gradient(#d4d4d4,rgba(255,255,255,0));-webkit-mask-image:linear-gradient(90deg,#000 1110px,transparent 1140px)"></div>
 <svg class="abs" style="left:8px;top:7px" width="16" height="16" viewBox="0 0 16 16"><rect x="0.5" y="2.5" width="15" height="12" fill="#000" stroke="#777"/><rect x="1" y="3" width="14" height="1.5" fill="#999"/><text x="2" y="12" font-size="6.5" font-weight="bold" fill="#fff" font-family="Liberation Mono">C:\_</text></svg>
 <div class="abs" style="left:29px;top:7px;line-height:16px;font-size:12px;color:#8c8c8c">C:\Windows\System32\cmd.exe</div>
 <svg class="abs" style="left:1130px;top:0" width="136" height="30" viewBox="0 0 136 30">
  <path d="M17 14.5 H27" stroke="#808080" stroke-width="1"/>
  <rect x="62.5" y="9.5" width="9" height="9" fill="none" stroke="#808080" stroke-width="1"/>
  <path d="M108 9 L118 19 M118 9 L108 19" stroke="#808080" stroke-width="1"/>
 </svg>
 <div class="abs" style="left:0;top:30px;width:1249px;height:652px;background:#0c0c0c"></div>
 <div class="abs" style="left:1249px;top:30px;width:17px;height:652px;background:#f0f0f0;border:1px solid #fff"></div>
 <div class="abs" style="left:1251px;top:47px;width:14px;height:17px;background:#cdcdcd"></div>
 <svg class="abs" style="left:1250px;top:30px" width="16" height="16"><path d="M4 10 L8 6 L12 10" fill="none" stroke="#606060" stroke-width="1.8"/></svg>
 <pre class="abs" style="left:0;top:32px;margin:0;font-family:'Liberation Mono',monospace;font-size:13.33px;line-height:16px;color:#cccccc">Microsoft Windows [Version 10.0.17763.503]
(c) 2018 Microsoft Corporation. Με επιφύλαξη κάθε νόμιμου δικαιώματος.

C:\adb&gt;fastboot devices
0622d6647d28    fastboot

C:\adb&gt;fastboot flash recovery C:\adb\twrp_cereus_3.2.3-3_ss_new-fstab.img
target reported max download size of 134217728 bytes
sending 'recovery' (17010 KB)...
OKAY [  0.719s]
writing 'recovery'...
OKAY [  0.250s]
finished. total time: 1.109s

C:\adb&gt;fastboot boot C:\adb\twrp_cereus_3.2.3-3_ss_new-fstab.img
downloading 'boot.img'...
OKAY [  0.594s]
booting...
OKAY [  0.062s]
finished. total time: 0.672s

C:\adb&gt;</pre>
</div>
<!-- taskbar -->
<div class="abs" id="tb" style="z-index:10;left:0;top:1040px;width:1920px;height:40px;background:#0a0e13">
 <div class="abs" style="left:196px;top:0;width:44px;height:40px;background:#3a3c40"></div>
 <div class="abs" style="left:240px;top:0;width:4px;height:40px;background:#2c2e32"></div>
 <div class="abs" style="left:196px;top:38px;width:48px;height:2px;background:#6a98d0"></div>
 <div class="abs" style="left:347px;top:38px;width:40px;height:2px;background:#6a98d0"></div>
 <div class="abs" style="left:396px;top:38px;width:40px;height:2px;background:#6a98d0"></div>
 <svg class="abs" style="left:0;top:0" width="440" height="40" viewBox="0 0 440 40">
  <path d="M16 13.5 L22.5 12.6 V19.3 H16Z M23.5 12.4 L32 11.2 V19.3 H23.5Z M16 20.3 H22.5 V27 L16 26.2Z M23.5 20.3 H32 V28.4 L23.5 27.2Z" fill="#fff"/>
  <circle cx="74" cy="16.5" r="5.3" fill="none" stroke="#fff" stroke-width="1.2"/><path d="M70.3 20.3 L64 27" stroke="#fff" stroke-width="1.3"/>
  <path d="M112.5 12 V14.5 H122.5 V12 M112.5 16.5 H122.5 V22.5 H112.5Z M112.5 27 V24.5 H122.5 V27" fill="none" stroke="#fff" stroke-width="1"/><rect x="125" y="16" width="3" height="3" fill="#fff"/><path d="M126.5 12 V14.5 M126.5 20 V27" stroke="#fff" stroke-width="1.1"/>
  <path fill-rule="evenodd" d="M161 18.5 Q163.5 9 172 9 Q181.5 9 181.5 21 V23 H167.8 Q168.5 27 174 27.5 Q178 27.5 180.2 25.5 V29.8 Q177.5 31.2 173 31.2 Q163.5 31.2 163.5 23.5 Q163.5 16.5 170 14 Q164.5 14.5 161 18.5Z M167.8 19.5 H177.6 Q177.2 14.8 172.6 14.8 Q168.6 14.8 167.8 19.5Z" fill="#1a86e0"/>
  <path d="M209 12 H217 L219 14 H230.5 V29 H209Z" fill="#f4c960"/><path d="M209 15 H230.5 V29 H209Z" fill="#fde69a"/><rect x="210" y="12.5" width="6" height="2" fill="#d8e6f0"/><path d="M213 30 V22.5 H226 V30 H222.5 V25.5 H216.5 V30Z" fill="#2ea0e8"/>
  <path d="M257 16 H280 V31 Q280 32 279 32 H258 Q257 32 257 31Z" fill="#fff"/><path d="M263.5 16 V13.5 Q263.5 10 268.5 10 Q273.5 10 273.5 13.5 V16" fill="none" stroke="#fff" stroke-width="1.3"/><rect x="263.5" y="19" width="4.5" height="4.5" fill="#f35325"/><rect x="269" y="19" width="4.5" height="4.5" fill="#81bc06"/><rect x="263.5" y="24.5" width="4.5" height="4.5" fill="#05a6f0"/><rect x="269" y="24.5" width="4.5" height="4.5" fill="#ffba08"/>
  <path d="M306 17.5 L318 9.5 L330 17.5 V29 H306Z" fill="#fff"/><path d="M306 17.5 L330 17.5 L318 21 L324 27 L317 22 Z" fill="#0a0e13"/>
  <circle cx="367" cy="20" r="11" fill="#3e3e3e"/><path d="M357.5 14.5 A11 11 0 0 1 376.5 14.5 L367 14.5 Q362 14.5 360 19Z" fill="#dd4b39"/><path d="M376.5 14.5 A11 11 0 0 1 378 21 H371 Q371 16 367 14.5Z" fill="#f4c20d"/><path d="M357.5 14.5 L362 21 H356 A11 11 0 0 1 357.5 14.5Z" fill="#1da462"/><circle cx="367" cy="19" r="4.2" fill="#fff"/><circle cx="367" cy="19" r="3.2" fill="#4a88ea"/><rect x="356" y="21" width="22" height="1" fill="#3e3e3e"/><text x="367" y="28.5" font-size="4" fill="#bbb" text-anchor="middle" font-family="Liberation Sans">Beta</text>
  <rect x="404.5" y="10.5" width="21" height="18" fill="#000" stroke="#aaa"/><rect x="405" y="11" width="20" height="1.5" fill="#bbb"/><text x="406" y="19" font-size="5" font-weight="bold" fill="#ddd" font-family="Liberation Mono">C:\</text><path d="M416 18.5 H424" stroke="#ddd" stroke-width="1"/>
 </svg>
 <svg class="abs" style="left:1680px;top:0" width="100" height="40" viewBox="0 0 100 40">
  <circle cx="17" cy="15" r="2.6" fill="none" stroke="#fff" stroke-width="1.1"/><path d="M12.5 22 Q13 18 17 18 Q21 18 21.5 22" fill="none" stroke="#fff" stroke-width="1.1"/>
  <circle cx="11" cy="19.5" r="2.8" fill="none" stroke="#fff" stroke-width="1.1"/><path d="M7 26.5 Q7.5 22.5 11 22.5 Q14.5 22.5 15 26.5" fill="none" stroke="#fff" stroke-width="1.1"/>
  <path d="M46.5 26 A11 11 0 0 1 57.5 15 M49.5 26 A8 8 0 0 1 57.5 18 M52.5 26 A5 5 0 0 1 57.5 21" fill="none" stroke="#fff" stroke-width="1.1"/><circle cx="57" cy="25.5" r="1.3" fill="#fff"/>
  <path d="M67.5 17.5 H70 L74 13.5 V26 L70 22 H67.5Z" fill="none" stroke="#fff" stroke-width="1.1"/><path d="M76.5 17 Q78 19.5 76.5 22.5 M79 15 Q81.5 19.5 79 24.5 M81.5 13 Q85 19.5 81.5 26.5" fill="none" stroke="#fff" stroke-width="1.1"/>
 </svg>
 <div class="abs" style="left:1773px;top:12px;font-size:12.5px;line-height:16px;color:#fff;transform:scaleX(.87);transform-origin:0 0">ENG</div>
 <div class="abs" style="left:1800px;top:3px;width:70px;text-align:center;font-size:12px;line-height:16px;color:#fff">4:31 μμ</div>
 <div class="abs" style="left:1800px;top:21px;width:70px;text-align:center;font-size:12px;line-height:16px;color:#fff">27/5/2019</div>
 <svg class="abs" style="left:1870px;top:0" width="50" height="40" viewBox="0 0 50 40">
  <path d="M9 12 H25 V26 H15 L12 29 V26 H9Z" fill="#fff"/><path d="M12 16 H22 M12 19 H22 M12 22 H19" stroke="#0a0e13" stroke-width="1"/>
  <circle cx="24.5" cy="27.5" r="7" fill="#333" stroke="#555" stroke-width="1"/><text x="24.5" y="31.5" font-size="10.5" fill="#fff" text-anchor="middle" font-family="Liberation Sans">2</text>
  <path d="M45.5 0 V40" stroke="#555" stroke-width="1"/>
 </svg>
</div>

</body></html>
